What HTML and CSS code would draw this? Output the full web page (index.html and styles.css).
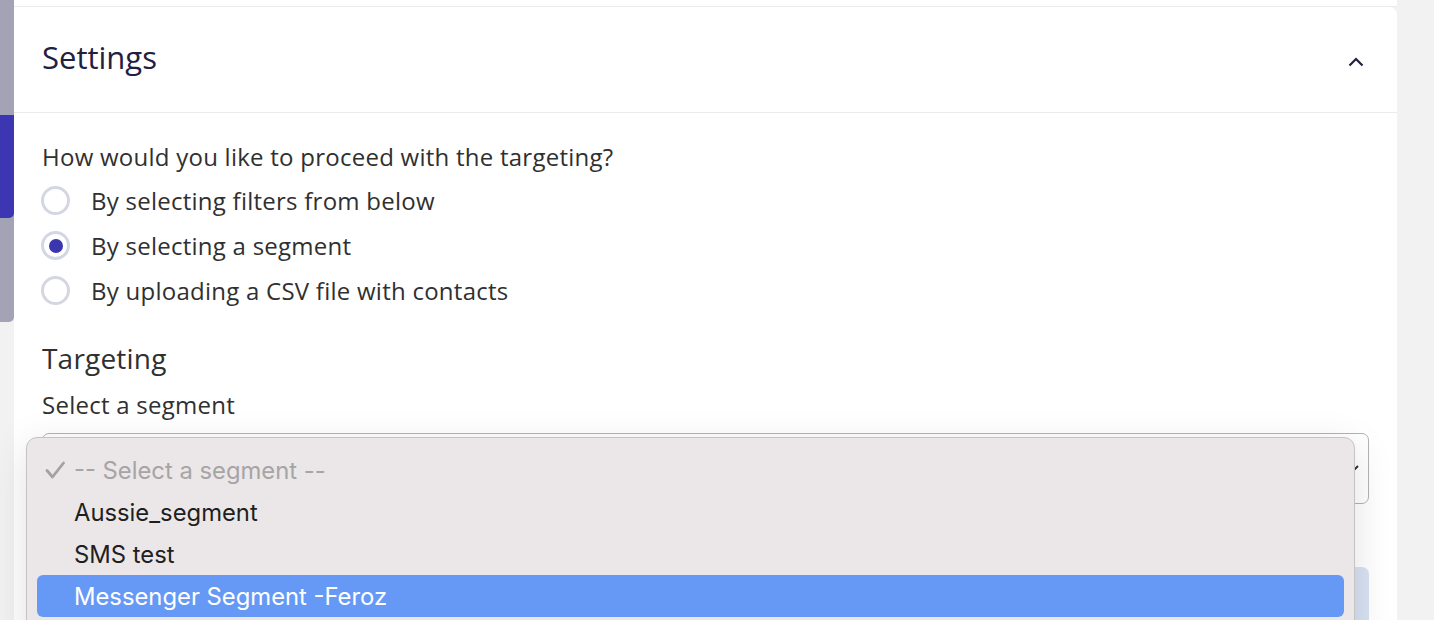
FILE: index.html
```html
<!DOCTYPE html>
<html>
<head>
<meta charset="utf-8">
<link rel="stylesheet" href="styles.css">
</head>
<body>
<div class="page">
  <div class="rail">
    <div class="rail-top"></div>
    <div class="rail-active"></div>
  </div>
  <div class="main">
    <div class="prev-card"></div>
    <section class="card">
      <header class="card-header">
        <h2 class="card-title">Settings</h2>
        <svg class="chev-up" width="16" height="10" viewBox="0 0 16 10"><path d="M1.5 8.5 L8 2 L14.5 8.5" fill="none" stroke="#23213f" stroke-width="2.2"/></svg>
      </header>
      <div class="card-body">
        <p class="question">How would you like to proceed with the targeting?</p>
        <label class="radio-row"><span class="radio"></span><span class="radio-label">By selecting filters from below</span></label>
        <label class="radio-row"><span class="radio checked"></span><span class="radio-label">By selecting a segment</span></label>
        <label class="radio-row"><span class="radio"></span><span class="radio-label">By uploading a CSV file with contacts</span></label>
        <h3 class="section-title">Targeting</h3>
        <div class="field-label">Select a segment</div>
        <div class="select-wrap">
          <div class="select">
            <svg class="chev-down" width="20" height="12" viewBox="0 0 20 12"><path d="M2 2 L10 10 L18 2" fill="none" stroke="#2b2b2b" stroke-width="1.8"/></svg>
          </div>
          <div class="menu">
            <div class="menu-item placeholder">
              <svg class="check" width="20" height="18" viewBox="0 0 20 18"><path d="M2 9.5 L7.5 16 L18.5 2" fill="none" stroke="#a3a1a3" stroke-width="2.8" stroke-linecap="round" stroke-linejoin="round"/></svg>
              <span>-- Select a segment --</span>
            </div>
            <div class="menu-item">Aussie_segment</div>
            <div class="menu-item">SMS test</div>
            <div class="menu-item active">Messenger Segment -Feroz</div>
          </div>
        </div>
        <div class="info-box"></div>
      </div>
    </section>
  </div>
  <div class="gutter"></div>
</div>
</body>
</html>
```
FILE: styles.css
```css
* { box-sizing: border-box; }
html, body { margin: 0; padding: 0; }
body {
  background: #f2f2f2;
  font-family: "Open Sans", "Lato", sans-serif;
  overflow: hidden;
  height: 620px;
}
.page {
  display: flex;
  width: 1434px;
  height: 620px;
  overflow: hidden;
}
.rail {
  width: 14px;
  flex: none;
  height: 322px;
  background: #a3a3b6;
  border-bottom-right-radius: 5px;
}
.rail-top { height: 115px; }
.rail-active {
  height: 103px;
  background: #3d36b3;
  border-bottom-right-radius: 5px;
}
.main {
  width: 1383px;
  flex: none;
  display: flex;
  flex-direction: column;
}
.gutter { flex: 1; }
.prev-card {
  flex: none;
  height: 7px;
  background: #fff;
  border-bottom: 1px solid #ebebeb;
}
.card {
  flex: none;
  background: #fff;
  border-top-right-radius: 8px;
}
.card-header {
  height: 106px;
  border-bottom: 1px solid #ebebeb;
  display: flex;
  align-items: center;
  justify-content: space-between;
  padding: 0 33px 0 28px;
}
.card-title {
  margin: 0;
  font-size: 31px;
  font-weight: 500;
  color: #22203f;
  padding-bottom: 5px;
}
.chev-up { margin-top: 4px; }
.card-body {
  padding: 29px 28px 0 28px;
}
.question {
  margin: 0 0 6px 0;
  font-size: 24px;
  letter-spacing: 0.25px;
  line-height: 30px;
  color: #303030;
}
.radio-row {
  height: 45px;
  display: flex;
  align-items: center;
  gap: 21px;
}
.radio {
  width: 29px;
  height: 29px;
  border-radius: 50%;
  border: 3px solid #d4d6e2;
  flex: none;
  margin-left: -1px;
  display: flex;
  align-items: center;
  justify-content: center;
}
.radio.checked::after {
  content: "";
  width: 14px;
  height: 14px;
  border-radius: 50%;
  background: #3b35b0;
}
.radio-label {
  font-size: 24px;
  letter-spacing: 0.25px;
  color: #303030;
}
.section-title {
  margin: 28px 0 0 0;
  font-size: 28px;
  letter-spacing: 0.2px;
  line-height: 34px;
  font-weight: 500;
  color: #303030;
}
.field-label {
  margin-top: 15px;
  font-size: 24px;
  letter-spacing: 0.25px;
  line-height: 30px;
  color: #303030;
}
.select-wrap {
  position: relative;
  margin-top: 13px;
}
.select {
  height: 71px;
  border: 1px solid #b3b3b3;
  border-radius: 7px;
  display: flex;
  align-items: center;
  justify-content: flex-end;
  padding-right: 8px;
}
.chev-down { margin-top: 2px; }
.menu {
  position: absolute;
  left: -16px;
  top: 4px;
  width: 1329px;
  height: 260px;
  background: #ebe7e8;
  border: 1px solid #c6c3c3;
  border-radius: 11px;
  padding: 11px 10px;
  box-shadow: 0 10px 40px rgba(0, 0, 0, 0.12);
  font-family: "Inter", "Liberation Sans", sans-serif;
  font-size: 23.8px;
  color: #1f1f1f;
  z-index: 2;
}
.menu-item {
  height: 42px;
  display: flex;
  align-items: center;
  padding-left: 37px;
  border-radius: 6px;
  position: relative;
}
.menu-item.placeholder { color: #a6a4a6; }
.check {
  position: absolute;
  left: 8px;
  top: 12px;
}
.menu-item.active {
  background: #6699f5;
  color: #fff;
}
.info-box {
  margin-top: 63px;
  height: 80px;
  background: #d9e2f3;
  border-radius: 7px;
}
```
